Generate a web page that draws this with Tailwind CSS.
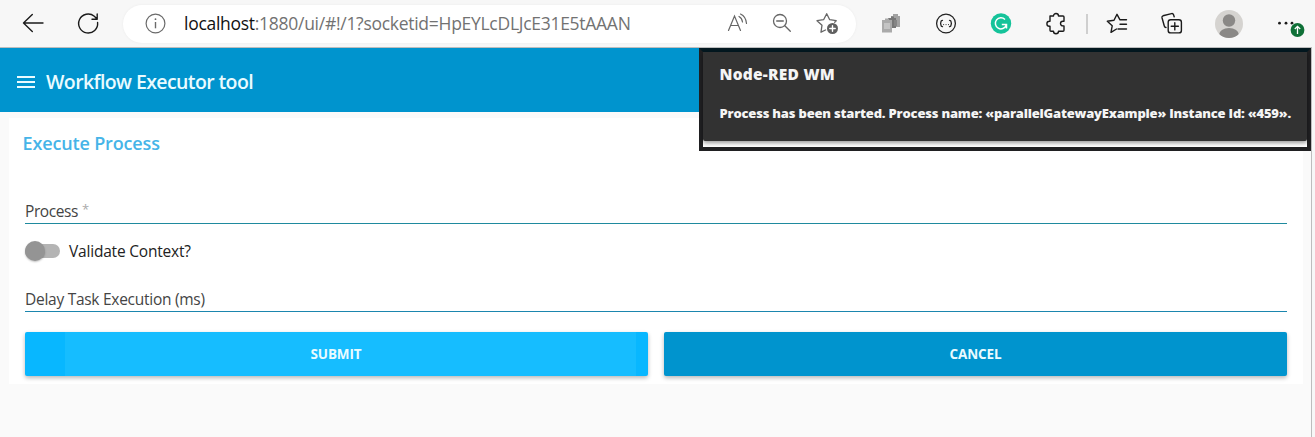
<!DOCTYPE html>
<html lang="en">
<head>
<meta charset="utf-8">
<title>Workflow Executor tool</title>
<script src="https://cdn.jsdelivr.net/npm/@tailwindcss/browser@4"></script>
</head>
<body class="h-[437px] w-[1315px] overflow-hidden bg-[#f7f7f7] font-['Open_Sans','Noto_Sans',sans-serif]">
<header class="flex h-[47px] items-center bg-[#f7f7f7] pl-[5px]">
  <div class="flex w-[55px] justify-center">
    <svg class="h-6 w-6" viewBox="0 0 24 24" fill="none" stroke="#1b1b1b" stroke-width="1.4" stroke-linecap="round" stroke-linejoin="round"><path d="M22 11H2.500M11.300 2.500 2.500 11l8.800 8.500"/></svg>
  </div>
  <div class="flex w-[55px] justify-center">
    <svg class="h-6 w-6" viewBox="0 0 24 24" fill="none" stroke="#1b1b1b" stroke-width="1.4" stroke-linecap="round" stroke-linejoin="round"><path d="M21.600 10.500A9.500 9.500 0 1 1 18.300 4.300L20.800 6.800M21.200 2v5.200h-5.200"/></svg>
  </div>
  <div class="ml-2 flex h-[38px] w-[733px] items-center rounded-full bg-white pl-[21px] shadow-[0_0_3px_rgba(0,0,0,0.05)]">
    <svg class="h-[22px] w-[22px]" viewBox="0 0 22 22" fill="none" stroke="#6a6a6a" stroke-width="1.2"><circle cx="11.500" cy="10.500" r="9.400"/><path d="M11.500 9v6.300" stroke-width="1.400"/><circle cx="11.500" cy="6.200" r=".9" fill="#6a6a6a" stroke="none"/></svg>
    <p class="ml-[18px] w-[536px] whitespace-nowrap pb-0.5 text-[17.5px] leading-6 tracking-[-0.28px] text-[#727272]"><span class="text-[#111]">localhost</span>:1880/ui/#!/1?socketid=HpEYLcDLJcE31E5tAAAN</p>
    <div class="flex items-center">
      <svg class="h-6 w-[45px]" viewBox="0 0 45 24" fill="none" stroke="#666" stroke-width="1.2" stroke-linecap="round"><path d="m8.500 18.500 6-14.500 6 14.500M10.500 13.500h8M19 4.500q3 1.500 3.500 5.500M20.500 2q5.500 2.500 6 9.500"/></svg>
      <svg class="h-6 w-[45px]" viewBox="0 0 45 24" fill="none" stroke="#666" stroke-width="1.3" stroke-linecap="round"><circle cx="15" cy="9" r="6.500"/><path d="M11.700 9h6.600M19.800 13.800l5.500 5.500"/></svg>
      <svg class="h-6 w-[45px]" viewBox="0 0 45 24" fill="none" stroke="#666" stroke-width="1.3" stroke-linecap="round" stroke-linejoin="round"><path d="M15.500 18 11 20.200l1-7L7 8.700l6.600-1L16.700 1.700l3 6 6.500 1-1.500 1.500"/><circle cx="22.500" cy="16.500" r="5.500" fill="#606060" stroke="none"/><path d="M22.500 13.800v5.400M19.800 16.500h5.400" stroke="#fff" stroke-width="1.400"/></svg>
    </div>
  </div>
  <div class="ml-[7px] flex w-[55px] justify-center">
    <svg class="h-6 w-6" viewBox="0 0 24 24"><path d="M12 4h2V2h5v2h2v11h-9z" fill="#a2a2a2"/><path d="M9 6h3V4.500h3V6h2v10H9z" fill="#777"/><path d="M15 8h3v6h-3z" fill="#858585"/><path d="M3 8h3V6.500h4V8h3v12.500H3z" fill="#aaa"/><path d="M5 11h6v6H5z" fill="#c4c4c4"/></svg>
  </div>
  <div class="flex w-[55px] justify-center">
    <svg class="h-6 w-6" viewBox="0 0 24 24" fill="none" stroke="#222" stroke-width="1.300" stroke-linecap="round"><circle cx="12" cy="11.500" r="9.400"/><path d="M8.500 8.300q-1.500 0-1.500 1.300 0 1.900-1 1.900 1 0 1 1.800 0 1.400 1.500 1.400M15.500 8.300q1.500 0 1.500 1.300 0 1.900 1 1.900-1 0-1 1.800 0 1.400-1.500 1.400"/><path d="M9.600 12.600h.1M12 12.600h.1M14.400 12.600h.1" stroke-width="1"/></svg>
  </div>
  <div class="flex w-[55px] justify-center">
    <svg class="h-6 w-6" viewBox="0 0 24 24" fill="none"><circle cx="12" cy="11.500" r="10.200" fill="#15c39a"/><path d="M16 7.400A5.600 5.600 0 1 0 17.200 13.300M12.800 12.600h4.700v4" stroke="#fff" stroke-width="1.500"/></svg>
  </div>
  <div class="flex w-[55px] justify-center">
    <svg class="h-6 w-6" viewBox="0 0 24 24" fill="none" stroke="#1b1b1b" stroke-width="1.400" stroke-linejoin="round"><path d="M6 4h3.500a2.500 2.500 0 0 1 5 0H19a1 1 0 0 1 1 1v4.300h-1.200a2.300 2.300 0 0 0 0 4.600H20v4.300a1 1 0 0 1-1 1h-4.500a2.500 2.500 0 0 1-5 0H7a1 1 0 0 1-1-1v-4h-.6a2.500 2.500 0 0 1 0-5H6z"/></svg>
  </div>
  <div class="ml-[3px] h-5 w-[2px] bg-[#cfcfcf]"></div>
  <div class="ml-px flex w-[55px] justify-center">
    <svg class="h-6 w-6" viewBox="0 0 24 24" fill="none" stroke="#1b1b1b" stroke-width="1.400" stroke-linecap="round" stroke-linejoin="round"><path d="M11.500 17 6 20.300l1.200-6.500L2.300 9.300 9 8.300 12 2.300l3 5.500h6.500M15 12.300h6.500M13 17h8.500"/></svg>
  </div>
  <div class="flex w-[55px] justify-center">
    <svg class="h-6 w-6" viewBox="0 0 24 24" fill="none" stroke="#1b1b1b" stroke-width="1.400" stroke-linecap="round" stroke-linejoin="round"><path d="M6 15.500q-1.300 0-1.700-1.500L2 5.700Q1.700 4.300 3 3.800l8.500-2.200q1.500-.3 2 1l.7 2.200"/><rect x="8.200" y="7.700" width="13.200" height="13.200" rx="2.500"/><path d="M14.800 10.700v7.200M11.200 14.300h7.200"/></svg>
  </div>
  <div class="ml-[2px] flex w-[55px] justify-center">
    <svg class="h-7 w-7" viewBox="0 0 28 28"><defs><clipPath id="face"><circle cx="14" cy="14" r="14"/></clipPath></defs><g clip-path="url(#face)"><path d="M0 0h28v28H0z" fill="#d5d3d0"/><circle cx="14" cy="10.500" r="6.200" fill="#8a8886"/><ellipse cx="14" cy="25" rx="10" ry="7" fill="#8a8886"/></g></svg>
  </div>
  <svg class="ml-[17px] h-8 w-10" viewBox="0 0 40 32"><g fill="#1b1b1b"><circle cx="6.500" cy="15.200" r="1.400"/><circle cx="13" cy="15.200" r="1.400"/><circle cx="19" cy="15.200" r="1.400"/></g><circle cx="24.500" cy="22" r="7.500" fill="#f7f7f7"/><circle cx="24.500" cy="22" r="6.900" fill="#0f7037"/><path d="M24.500 26v-7.500M21.800 21l2.700-2.700 2.700 2.700" fill="none" stroke="#fff" stroke-width="1.300"/></svg>
</header>

<div class="relative h-[390px] w-[1312px] border-t border-r border-[#bdbdbd] bg-[#fafafa]">
  <div class="flex h-16 items-center bg-[#0094ce] pt-1 pl-[17px] text-[#e9fbff]">
    <svg class="h-[14px] w-[18px]" viewBox="0 0 18 14" fill="#e9fbff"><path d="M0 1h18v2H0zM0 6h18v2H0zM0 11h18v2H0z"/></svg>
    <h1 class="ml-[11px] whitespace-nowrap text-[19.5px] font-[550] tracking-[-0.6px]">Workflow Executor tool</h1>
  </div>

  <main class="mt-1.5 ml-[9px] h-[266px] w-[1294px] bg-white pl-4">
    <h2 class="-ml-[2.5px] pt-[13px] text-[18px] font-semibold leading-6 tracking-[-0.15px] text-[#46b4e8]">Execute Process</h2>
    <div class="mt-[45px] h-[23px] text-[15.5px] leading-[22px] tracking-[-0.4px] text-[#444]"><span>Process</span><span class="ml-1 inline-block -translate-y-[3px] text-[13px] leading-3 text-[#aaa]">*</span></div>
    <div class="h-px w-[1262px] bg-[#1f8a9e]"></div>
    <div class="mt-[15px] flex h-6 items-center">
      <div class="flex h-[14px] w-[35px] items-center rounded-full bg-[#b4b4b4]"><div class="h-5 w-5 shrink-0 rounded-full bg-[#949494] shadow-[0_1px_2px_rgba(0,0,0,0.25)]"></div></div>
      <span class="ml-[9px] pt-0.5 text-[15.5px] tracking-[-0.2px] text-[#222]">Validate Context?</span>
    </div>
    <div class="mt-[25px] h-[23px] text-[15.5px] leading-[22px] tracking-[-0.27px] text-[#444]">Delay Task Execution (ms)</div>
    <div class="h-px w-[1262px] bg-[#1b86ae]"></div>
    <div class="mt-5 flex gap-4 text-[13.5px] font-bold tracking-[-0.15px] text-[#e9fbff]">
      <button class="h-11 w-[623px] rounded-[2px] bg-[#08b7ff] pr-3 pl-10 shadow-[0_2px_4px_rgba(0,0,0,0.28)]"><span class="flex h-full items-center justify-center bg-[#16bdff] pr-[29px]">SUBMIT</span></button>
      <button class="h-11 w-[623px] rounded-[2px] bg-[#0094ce] shadow-[0_2px_4px_rgba(0,0,0,0.28)]">CANCEL</button>
    </div>
  </main>

  <aside class="absolute top-0 left-[699px] h-[103px] w-[612px] border-4 border-[#202022] border-t-[#031820] bg-white">
    <div class="h-[89px] rounded-b-[2px] bg-[#323232] pt-[10px] pl-[16.5px] text-[#f5f5f5] shadow-[0_2px_4px_rgba(0,0,0,0.4)]">
      <h3 class="text-[15.5px] font-extrabold leading-6 tracking-[0.25px]">Node-RED WM</h3>
      <p class="mt-[15px] whitespace-nowrap text-[13px] font-extrabold leading-6 tracking-[-0.2px]">Process has been started. Process name: «parallelGatewayExample» Instance Id: «459».</p>
    </div>
  </aside>
</div>
</body>
</html>
